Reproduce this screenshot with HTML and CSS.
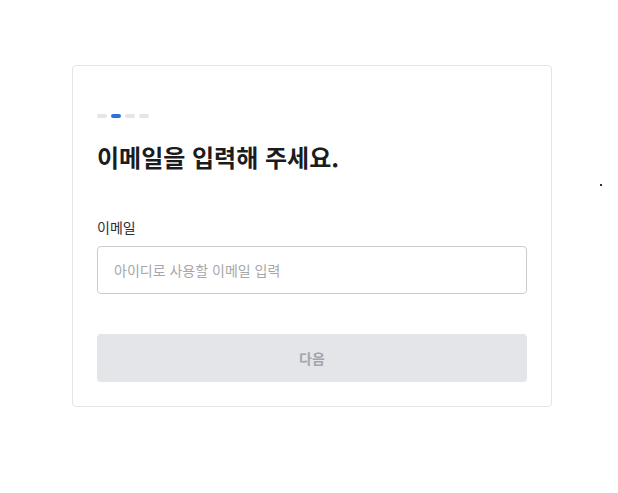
FILE: index.html
```html
<!DOCTYPE html>
<html lang="ko">
<head>
<meta charset="utf-8">
<link rel="stylesheet" href="styles.css">
</head>
<body>
<div class="page">
  <div class="card">
    <div class="steps">
      <span class="step"></span>
      <span class="step active"></span>
      <span class="step"></span>
      <span class="step"></span>
    </div>
    <h1 class="title">이메일을 입력해 주세요.</h1>
    <label class="label" for="email">이메일</label>
    <input class="input" id="email" type="text" placeholder="아이디로 사용할 이메일 입력">
    <button class="btn" type="button">다음</button>
  </div>
</div>
<span class="speck"></span>
</body>
</html>
```

FILE: styles.css
```css
* { box-sizing: border-box; }
html, body { margin: 0; padding: 0; background: #fff; }
body {
  font-family: "Noto Sans CJK KR", "Noto Sans", sans-serif;
  width: 618px;
  height: 493px;
  position: relative;
  overflow: hidden;
}
.page {
  padding: 65px 0 0 72px;
}
.card {
  width: 480px;
  border: 1px solid #e3e5e8;
  border-radius: 4px;
  padding: 48px 24px 24px;
  display: flex;
  flex-direction: column;
}
.steps {
  display: flex;
  gap: 4px;
  height: 4px;
}
.step {
  width: 10px;
  height: 4px;
  border-radius: 2px;
  background: #e3e5e8;
}
.step.active { background: #2d72d9; }
.title {
  margin: 22px 0 0;
  font-size: 24px;
  font-weight: 700;
  color: #1b1c1e;
  line-height: 34px;
}
.label {
  margin-top: 43px;
  font-size: 14px;
  color: #2b2d31;
  line-height: 20px;
}
.input {
  margin-top: 9px;
  height: 48px;
  border: 1px solid #c9cbce;
  border-radius: 4px;
  padding: 0 16px;
  font-family: inherit;
  font-size: 14px;
  color: #222;
  outline: none;
}
.input::placeholder { color: #a4a7ad; }
.btn {
  margin-top: 40px;
  height: 48px;
  border: none;
  border-radius: 4px;
  background: #e4e5e8;
  color: #a3a6ac;
  font-family: inherit;
  font-size: 14px;
  font-weight: 700;
}
.speck {
  position: absolute;
  left: 600px;
  top: 184px;
  width: 2px;
  height: 2px;
  background: #333;
}
```
